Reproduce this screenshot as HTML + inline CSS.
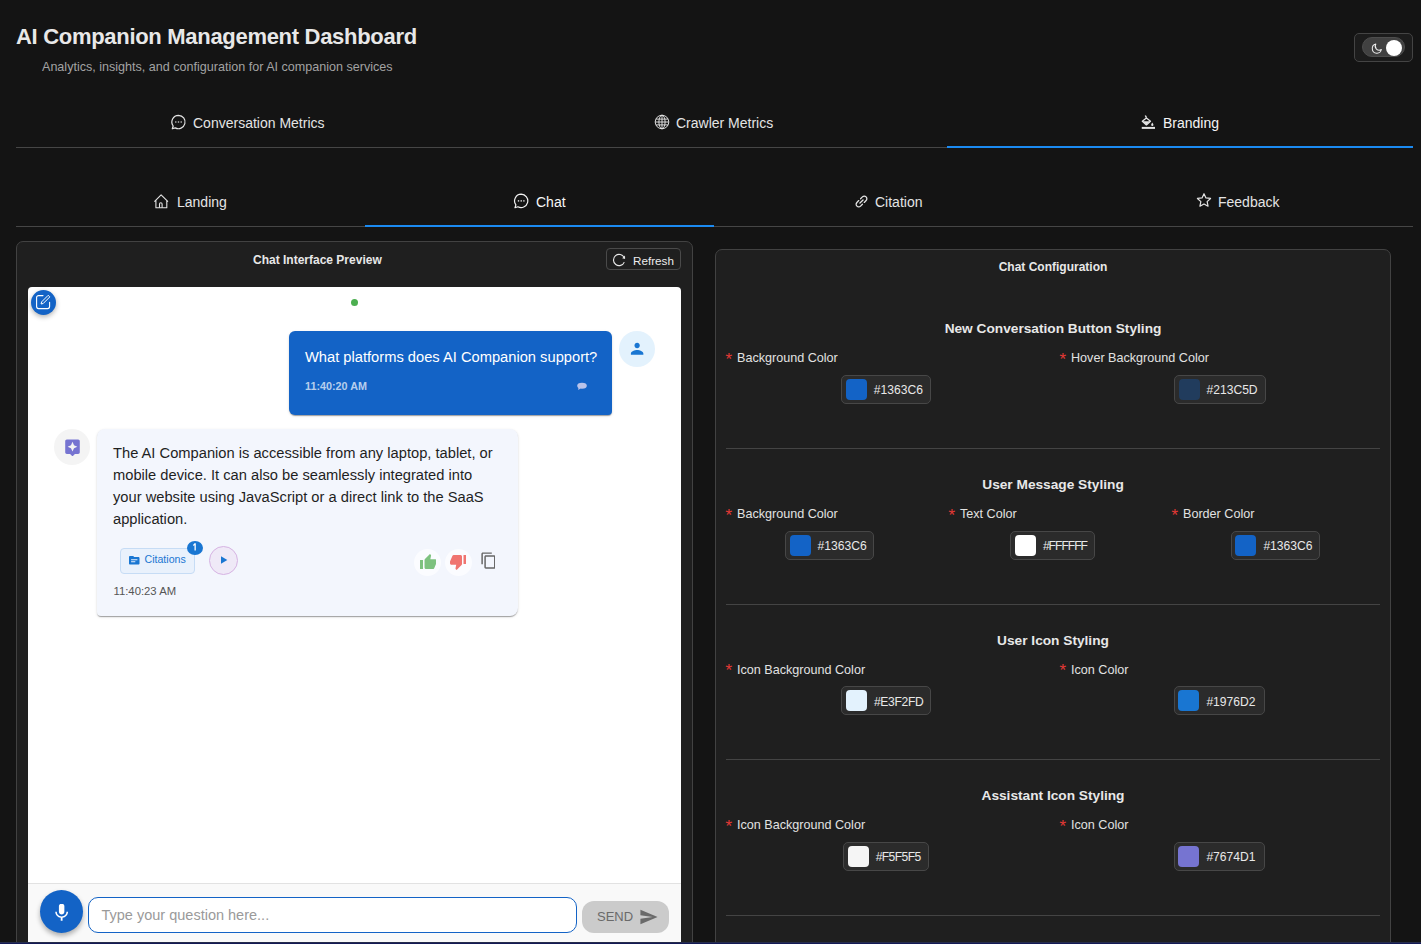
<!DOCTYPE html>
<html><head><meta charset="utf-8">
<style>
*{box-sizing:border-box;margin:0;padding:0}
html,body{width:1421px;height:944px;overflow:hidden;background:#141414;font-family:"Liberation Sans",sans-serif;color:#e6e6e6}
.a{position:absolute}
.t{position:absolute;white-space:nowrap;line-height:1}
svg{display:block}
.tabline{position:absolute;left:16px;width:1397px;height:1px;background:#464646}
.ind{position:absolute;height:2px;background:#1b8af1}
.tab{position:absolute;font-size:14px;color:#e4e4e4;white-space:nowrap;line-height:1}
.panel{position:absolute;background:#1f1f1f;border:1px solid #424242;border-radius:7px}
.lbl{position:absolute;font-size:12.6px;color:#e2e2e2;white-space:nowrap;line-height:1}
.lbl b{color:#e53935;font-weight:400;font-size:17px;position:absolute;left:-0.5px;top:-1.5px}
.lbl{padding-left:11px}
.sw{position:absolute;height:29px;border:1px solid #474747;background:#2b2b2b;border-radius:5px;padding:3px 0 3px 3.5px;display:flex;align-items:center;white-space:nowrap}
.sw i{display:block;width:21px;height:21px;border-radius:4px;margin-right:7px}
.sw span{font-size:12.1px;color:#e8e8e8;line-height:1;position:relative;top:1px}
.hd{position:absolute;left:715px;width:676px;text-align:center;font-size:13.7px;font-weight:700;color:#e8e8e8;line-height:1;white-space:nowrap}
.div{position:absolute;left:726px;width:654px;height:1px;background:#444}
</style></head>
<body>
<!-- header -->
<div class="t" style="left:16px;top:25.5px;font-size:22px;letter-spacing:-0.3px;font-weight:700;color:#e8e8e8">AI Companion Management Dashboard</div>
<div class="t" style="left:42px;top:60.5px;font-size:12.57px;color:#a3a3a3">Analytics, insights, and configuration for AI companion services</div>

<!-- toggle -->
<div class="a" style="left:1354px;top:33px;width:59px;height:29px;border:1px solid #444;border-radius:5px;background:#1c1c1c"></div>
<div class="a" style="left:1362px;top:37px;width:43px;height:20px;border-radius:10px;background:#414141;border:1px solid #4d4d4d"></div>
<div class="a" style="left:1386px;top:40px;width:16px;height:16px;border-radius:50%;background:#fff"></div>

<!-- tabs row 1 -->
<div class="tabline" style="top:147px"></div>
<div class="ind" style="left:947px;width:466px;top:146px"></div>


<!-- tab icons/text row1 -->
<svg class="a" style="left:170px;top:114px" width="17" height="17" viewBox="0 0 17 17"><path d="M8.5 1.3a6.7 6.7 0 1 1-3.3 12.6L2.3 14.8l0.9-2.8A6.7 6.7 0 0 1 8.5 1.3z" fill="none" stroke="#e4e4e4" stroke-width="1.2" stroke-linejoin="round"/><circle cx="5.8" cy="8" r=".8" fill="#d0d0d0"/><circle cx="8.5" cy="8" r=".8" fill="#d0d0d0"/><circle cx="11.2" cy="8" r=".8" fill="#d0d0d0"/></svg>
<div class="tab" style="left:193px;top:116px">Conversation Metrics</div>
<svg class="a" style="left:654px;top:114px" width="16" height="16" viewBox="0 0 16 16" fill="none" stroke="#e4e4e4" stroke-width="0.95"><circle cx="8" cy="8" r="6.8"/><ellipse cx="8" cy="8" rx="3.1" ry="6.8"/><path d="M8 1.2v13.6M1.2 8h13.6M1.9 5.1h12.2M1.9 10.9h12.2"/></svg>
<div class="tab" style="left:676px;top:116px">Crawler Metrics</div>
<svg class="a" style="left:1141px;top:114px" width="16" height="16" viewBox="0 0 16 16"><path d="M4.3 1.5l1.2 2.2" stroke="#e4e4e4" stroke-width="1.4" fill="none"/><path d="M5.4 3.9L9.5 7.2 5.4 10.9 1.3 7.2z" fill="none" stroke="#e4e4e4" stroke-width="1.3" stroke-linejoin="round"/><path d="M1.6 7.3h7.6L5.4 10.8z" fill="#e4e4e4"/><path d="M11.3 8.6c-.6 1-1.1 1.7-1.1 2.3a1.1 1.1 0 0 0 2.2 0c0-.6-.5-1.3-1.1-2.3z" fill="#e4e4e4"/><rect x=".75" y="12.9" width="13.25" height="2" fill="#e4e4e4"/></svg>
<div class="tab" style="left:1163px;top:116px;color:#f4f4f4">Branding</div>

<!-- tab icons/text row2 -->
<svg class="a" style="left:153px;top:193px" width="17" height="16" viewBox="0 0 17 16" fill="none" stroke="#e4e4e4" stroke-width="1.1" stroke-linejoin="round"><path d="M1.4 8.6L8.1 1.8l6.9 6.8M2.9 7.3v7.4h10.9V7.3"/><path d="M6.5 14.7v-3.6a1.3 1.3 0 0 1 2.6 0v3.6"/></svg>
<div class="tab" style="left:177px;top:195px">Landing</div>
<svg class="a" style="left:513px;top:193px" width="17" height="17" viewBox="0 0 17 17"><path d="M8.2 1.2a6.7 6.7 0 1 1-3.3 12.6L2 14.7l0.9-2.8A6.7 6.7 0 0 1 8.2 1.2z" fill="none" stroke="#f2f2f2" stroke-width="1.2" stroke-linejoin="round"/><circle cx="5.5" cy="7.9" r=".8" fill="#d8d8d8"/><circle cx="8.2" cy="7.9" r=".8" fill="#d8d8d8"/><circle cx="10.9" cy="7.9" r=".8" fill="#d8d8d8"/></svg>
<div class="tab" style="left:536px;top:195px;color:#f8f8f8">Chat</div>
<svg class="a" style="left:854px;top:194px" width="15" height="15" viewBox="-7.5 -7.5 15 15"><g transform="rotate(-45)" fill="none" stroke="#e4e4e4" stroke-width="1.3" stroke-linecap="round"><path d="M-1.3 -2.6H-3.9A2.6 2.6 0 0 0 -3.9 2.6H-1.3M1.3 -2.6H3.9A2.6 2.6 0 0 1 3.9 2.6H1.3M-2.2 0H2.2"/></g></svg>
<div class="tab" style="left:875px;top:195px">Citation</div>
<svg class="a" style="left:1196.2px;top:192px" width="16" height="16" viewBox="0 0 16 16"><path d="M8.00 1.70 L9.94 5.93 L14.56 6.47 L11.14 9.62 L12.06 14.18 L8.00 11.90 L3.94 14.18 L4.86 9.62 L1.44 6.47 L6.06 5.93z" fill="none" stroke="#e4e4e4" stroke-width="1.2" stroke-linejoin="round"/></svg>
<div class="tab" style="left:1218px;top:195px">Feedback</div>

<!-- tabs row 2 -->
<div class="tabline" style="top:226px"></div>
<div class="ind" style="left:365px;width:349px;top:225px"></div>

<!-- left panel -->
<div class="panel" style="left:16px;top:241px;width:677px;height:760px"></div>
<div class="t" style="left:253px;top:253.8px;font-size:12px;font-weight:700;color:#e8e8e8">Chat Interface Preview</div>
<div class="a" style="left:606px;top:248px;width:75px;height:22px;border:1px solid #4a4a4a;border-radius:4px"></div>
<div class="t" style="left:633px;top:255px;font-size:11.7px;color:#ececec">Refresh</div>

<!-- chat preview -->
<div class="a" style="left:28px;top:287px;width:653px;height:655px;background:#fff;border-radius:4px 4px 0 0;overflow:hidden">
</div>
<div class="a" style="left:28px;top:884px;width:653px;height:58px;background:#f9f9f9;border-top:1px solid #e2e2e2;top:883px;height:59px"></div>
<!-- edit button -->
<div class="a" style="left:31px;top:290px;width:25px;height:25px;border-radius:50%;background:#1363c6;box-shadow:0 2px 5px rgba(0,0,0,.3)"></div>
<svg class="a" style="left:35px;top:294px" width="16" height="16" viewBox="0 0 16 16" fill="none" stroke="#fff" stroke-width="1.1"><path d="M8 1.6H3.6a2 2 0 0 0-2 2v9a2 2 0 0 0 2 2h9a2 2 0 0 0 2-2V8.2" stroke-linecap="round"/><path d="M13.2 1.3l1.6 1.6-6.6 6.6-2.1.5.5-2.1z" stroke-linejoin="round" stroke-width="1"/></svg>
<div class="a" style="left:351px;top:299px;width:7px;height:7px;border-radius:50%;background:#4caf50"></div>
<!-- user message -->
<div class="a" style="left:289px;top:331px;width:323px;height:84px;border-radius:6px 6px 4px 6px;background:#1363c6;box-shadow:0 2px 1px -1px rgba(0,0,0,.2),0 1px 1px 0 rgba(0,0,0,.14),0 1px 3px 0 rgba(0,0,0,.12)"></div>
<div class="t" style="left:305px;top:349.6px;font-size:14.7px;color:#fff">What platforms does AI Companion support?</div>
<div class="t" style="left:305px;top:381px;font-size:10.8px;font-weight:700;color:rgba(255,255,255,.7)">11:40:20 AM</div>
<svg class="a" style="left:576px;top:382px" width="12" height="9" viewBox="0 0 12 9"><ellipse cx="6" cy="3.8" rx="4.8" ry="3" fill="#b9c3ea"/><path d="M2.5 5.5L2.2 8 4.6 6.4z" fill="#b9c3ea"/></svg>
<div class="a" style="left:619px;top:331px;width:36px;height:36px;border-radius:50%;background:#e3f2fd"></div>
<svg class="a" style="left:629.9px;top:341px" width="14.25" height="14.25" viewBox="4 4 16 16"><path d="M12 12c1.66 0 3-1.34 3-3s-1.34-3-3-3-3 1.34-3 3 1.34 3 3 3m0 2c-2.67 0-7 1.34-7 4v1.5h14V18c0-2.66-4.33-4-7-4" fill="#1976d2"/></svg>
<!-- assistant -->
<div class="a" style="left:54px;top:429px;width:36px;height:36px;border-radius:50%;background:#f4f4f4"></div>
<svg class="a" style="left:63.5px;top:438.5px" width="17" height="17" viewBox="1.5 1.5 21 21"><path d="M19 2H5c-1.1 0-2 .9-2 2v14c0 1.1.9 2 2 2h4l3 3 3-3h4c1.1 0 2-.9 2-2V4c0-1.1-.9-2-2-2m-5.12 10.88L12 17l-1.88-4.12L6 11l4.12-1.88L12 5l1.88 4.12L18 11z" fill="#7674d1"/></svg>
<div class="a" style="left:97px;top:429px;width:421px;height:187px;border-radius:8px 8px 8px 4px;background:#f3f6fd;box-shadow:0 2px 1px -1px rgba(0,0,0,.2),0 1px 1px 0 rgba(0,0,0,.14),0 1px 3px 0 rgba(0,0,0,.12)"></div>
<div class="a" style="left:113px;top:443.4px;width:400px;font-size:14.7px;line-height:21.75px;color:#1f1f1f;white-space:nowrap">The AI Companion is accessible from any laptop, tablet, or<br>mobile device. It can also be seamlessly integrated into<br>your website using JavaScript or a direct link to the SaaS<br>application.</div>
<div class="a" style="left:120px;top:548px;width:75px;height:26px;border-radius:4px;background:#e9f1fc;border:1px solid #c6dcf5"></div>
<svg class="a" style="left:129px;top:555px" width="10.5" height="10.5" viewBox="2 2 20 20"><path d="M20 6h-8l-2-2H4c-1.1 0-1.99.9-1.99 2L2 18c0 1.1.9 2 2 2h16c1.1 0 2-.9 2-2V8c0-1.1-.9-2-2-2m-6 10H6v-2h8zm4-4H6v-2h12z" fill="#1976d2"/></svg>
<div class="t" style="left:144.5px;top:554.2px;font-size:10.6px;color:#1976d2">Citations</div>
<div class="a" style="left:187px;top:540.7px;width:16px;height:14.2px;border-radius:50%;background:#1976d2"></div><svg class="a" style="left:192px;top:542px" width="6" height="11" viewBox="0 0 6 11"><path d="M2.5 1.3h1.3v7.2H2.5V3.3l-1.3.7V2.8z" fill="#fff"/></svg>
<div class="a" style="left:209px;top:546px;width:29px;height:29px;border-radius:50%;background:#efe9f7;border:1px solid #d6b3e3"></div>
<svg class="a" style="left:219px;top:555px" width="10" height="10" viewBox="0 0 10 10"><path d="M2 1.2v7.6L8.3 5z" fill="#1976d2"/></svg>
<div class="t" style="left:113.5px;top:585.5px;font-size:11.3px;color:#555">11:40:23 AM</div>
<div class="a" style="left:414px;top:549px;width:27px;height:27px;border-radius:50%;background:#fbfcff"></div>
<svg class="a" style="left:419.6px;top:553.8px" width="16.6" height="15.1" viewBox="1 1 22 20"><path d="M1 21h4V9H1zm22-11c0-1.1-.9-2-2-2h-6.31l.95-4.57.03-.32c0-.41-.17-.79-.44-1.06L14.17 1 7.59 7.59C7.22 7.95 7 8.45 7 9v10c0 1.1.9 2 2 2h9c.83 0 1.54-.5 1.84-1.22l3.02-7.05c.09-.23.14-.47.14-.73z" fill="#7ec27f"/></svg>
<div class="a" style="left:445px;top:549px;width:27px;height:27px;border-radius:50%;background:#fbfcff"></div>
<svg class="a" style="left:449.8px;top:555px" width="16.5" height="15" viewBox="1 3 22 20"><path d="M15 3H6c-.83 0-1.54.5-1.84 1.22l-3.02 7.05c-.09.23-.14.47-.14.73v2c0 1.1.9 2 2 2h6.31l-.95 4.57-.03.32c0 .41.17.79.44 1.06L9.83 23l6.59-6.59c.36-.36.58-.86.58-1.41V5c0-1.1-.9-2-2-2m4 0v12h4V3z" fill="#f07470"/></svg>
<svg class="a" style="left:480.6px;top:552.2px" width="14.9" height="16.4" viewBox="1.5 0.5 20 22"><path d="M16 1H4c-1.1 0-2 .9-2 2v14h2V3h12zm3 4H8c-1.1 0-2 .9-2 2v14c0 1.1.9 2 2 2h11c1.1 0 2-.9 2-2V7c0-1.1-.9-2-2-2m0 16H8V7h11z" fill="#666"/></svg>
<!-- input bar -->
<div class="a" style="left:40px;top:890px;width:43px;height:43px;border-radius:50%;background:#1363c6;box-shadow:0 3px 5px rgba(0,0,0,.3)"></div>
<svg class="a" style="left:53.1px;top:903.5px" width="17.3" height="17.3" viewBox="2.5 2.5 19 19"><path d="M12 14c1.66 0 2.99-1.34 2.99-3L15 5c0-1.66-1.34-3-3-3S9 3.34 9 5v6c0 1.66 1.34 3 3 3m5.3-3c0 3-2.54 5.1-5.3 5.1S6.7 14 6.7 11H5c0 3.41 2.72 6.23 6 6.72V21h2v-3.28c3.28-.48 6-3.3 6-6.72z" fill="#fff"/></svg>
<div class="a" style="left:88px;top:897px;width:489px;height:36px;border-radius:10px;background:#fff;border:1.5px solid #1363c6"></div>
<div class="t" style="left:101.5px;top:908px;font-size:14.5px;color:#9a9a9a">Type your question here...</div>
<div class="a" style="left:582px;top:901px;width:87px;height:32px;border-radius:12px;background:#cbcbcb"></div>
<div class="t" style="left:597px;top:910px;font-size:13px;color:#6a6a6a">SEND</div>
<svg class="a" style="left:640px;top:909px" width="18" height="16" viewBox="1.5 2.5 22 19"><path d="M2.01 21 23 12 2.01 3 2 10l15 2-15 2z" fill="#6a6a6a"/></svg>


<!-- right panel -->
<div class="panel" style="left:715px;top:249px;width:676px;height:760px"></div>
<div class="hd" style="top:260.8px;font-size:12px">Chat Configuration</div>
<div class="hd" style="top:322.4px">New Conversation Button Styling</div>
<div class="lbl" style="left:726px;top:352.3px"><b>*</b>Background Color</div>
<div class="sw" style="left:841.3px;top:375.0px;width:89.5px"><i style="background:#1363c6"></i><span style="">#1363C6</span></div>
<div class="lbl" style="left:1060px;top:352.3px"><b>*</b>Hover Background Color</div>
<div class="sw" style="left:1174px;top:375.0px;width:91.7px"><i style="background:#213c5d"></i><span style="">#213C5D</span></div>
<div class="div" style="top:448px"></div>
<div class="hd" style="top:478.1px">User Message Styling</div>
<div class="lbl" style="left:726px;top:508.0px"><b>*</b>Background Color</div>
<div class="sw" style="left:785.1px;top:530.7px;width:89.4px"><i style="background:#1363c6"></i><span style="">#1363C6</span></div>
<div class="lbl" style="left:949px;top:508.0px"><b>*</b>Text Color</div>
<div class="sw" style="left:1010.4px;top:530.7px;width:84.2px"><i style="background:#ffffff"></i><span style="letter-spacing:-1px">#FFFFFF</span></div>
<div class="lbl" style="left:1172px;top:508.0px"><b>*</b>Border Color</div>
<div class="sw" style="left:1230.9px;top:530.7px;width:88.7px"><i style="background:#1363c6"></i><span style="">#1363C6</span></div>
<div class="div" style="top:604px"></div>
<div class="hd" style="top:633.7px">User Icon Styling</div>
<div class="lbl" style="left:726px;top:663.7px"><b>*</b>Icon Background Color</div>
<div class="sw" style="left:841.4px;top:686.3px;width:89.3px"><i style="background:#e3f2fd"></i><span style="letter-spacing:-0.3px">#E3F2FD</span></div>
<div class="lbl" style="left:1060px;top:663.7px"><b>*</b>Icon Color</div>
<div class="sw" style="left:1173.9px;top:686.3px;width:91px"><i style="background:#1976d2"></i><span style="">#1976D2</span></div>
<div class="div" style="top:759px"></div>
<div class="hd" style="top:789.4px">Assistant Icon Styling</div>
<div class="lbl" style="left:726px;top:819.3px"><b>*</b>Icon Background Color</div>
<div class="sw" style="left:843.2px;top:842.0px;width:85.4px"><i style="background:#f5f5f5"></i><span style="letter-spacing:-0.6px">#F5F5F5</span></div>
<div class="lbl" style="left:1060px;top:819.3px"><b>*</b>Icon Color</div>
<div class="sw" style="left:1173.9px;top:842.0px;width:91px"><i style="background:#7674d1"></i><span style="">#7674D1</span></div>
<div class="div" style="top:915px"></div>



<svg class="a" style="left:612px;top:253px" width="14" height="14" viewBox="0 0 14 14"><path d="M12.17 4.63A5.6 5.6 0 1 0 12.29 9.1" fill="none" stroke="#e8e8e8" stroke-width="1.15"/><path d="M13 2.6L13.1 5.9 10.2 5.3z" fill="#e8e8e8"/></svg>
<svg class="a" style="left:1370.8px;top:43px" width="11" height="11" viewBox="0.3 0.3 12 12"><path d="M5.6 1.5A5 5 0 1 0 11.6 7.4 4.3 4.3 0 0 1 5.6 1.5z" fill="none" stroke="#f0f0f0" stroke-width="1.1" stroke-linejoin="round"/></svg>
<!-- bottom strip -->
<div class="a" style="left:0;top:942px;width:1421px;height:2px;background:linear-gradient(#262c4c 50%,#131a55 50%)"></div>
</body></html>
